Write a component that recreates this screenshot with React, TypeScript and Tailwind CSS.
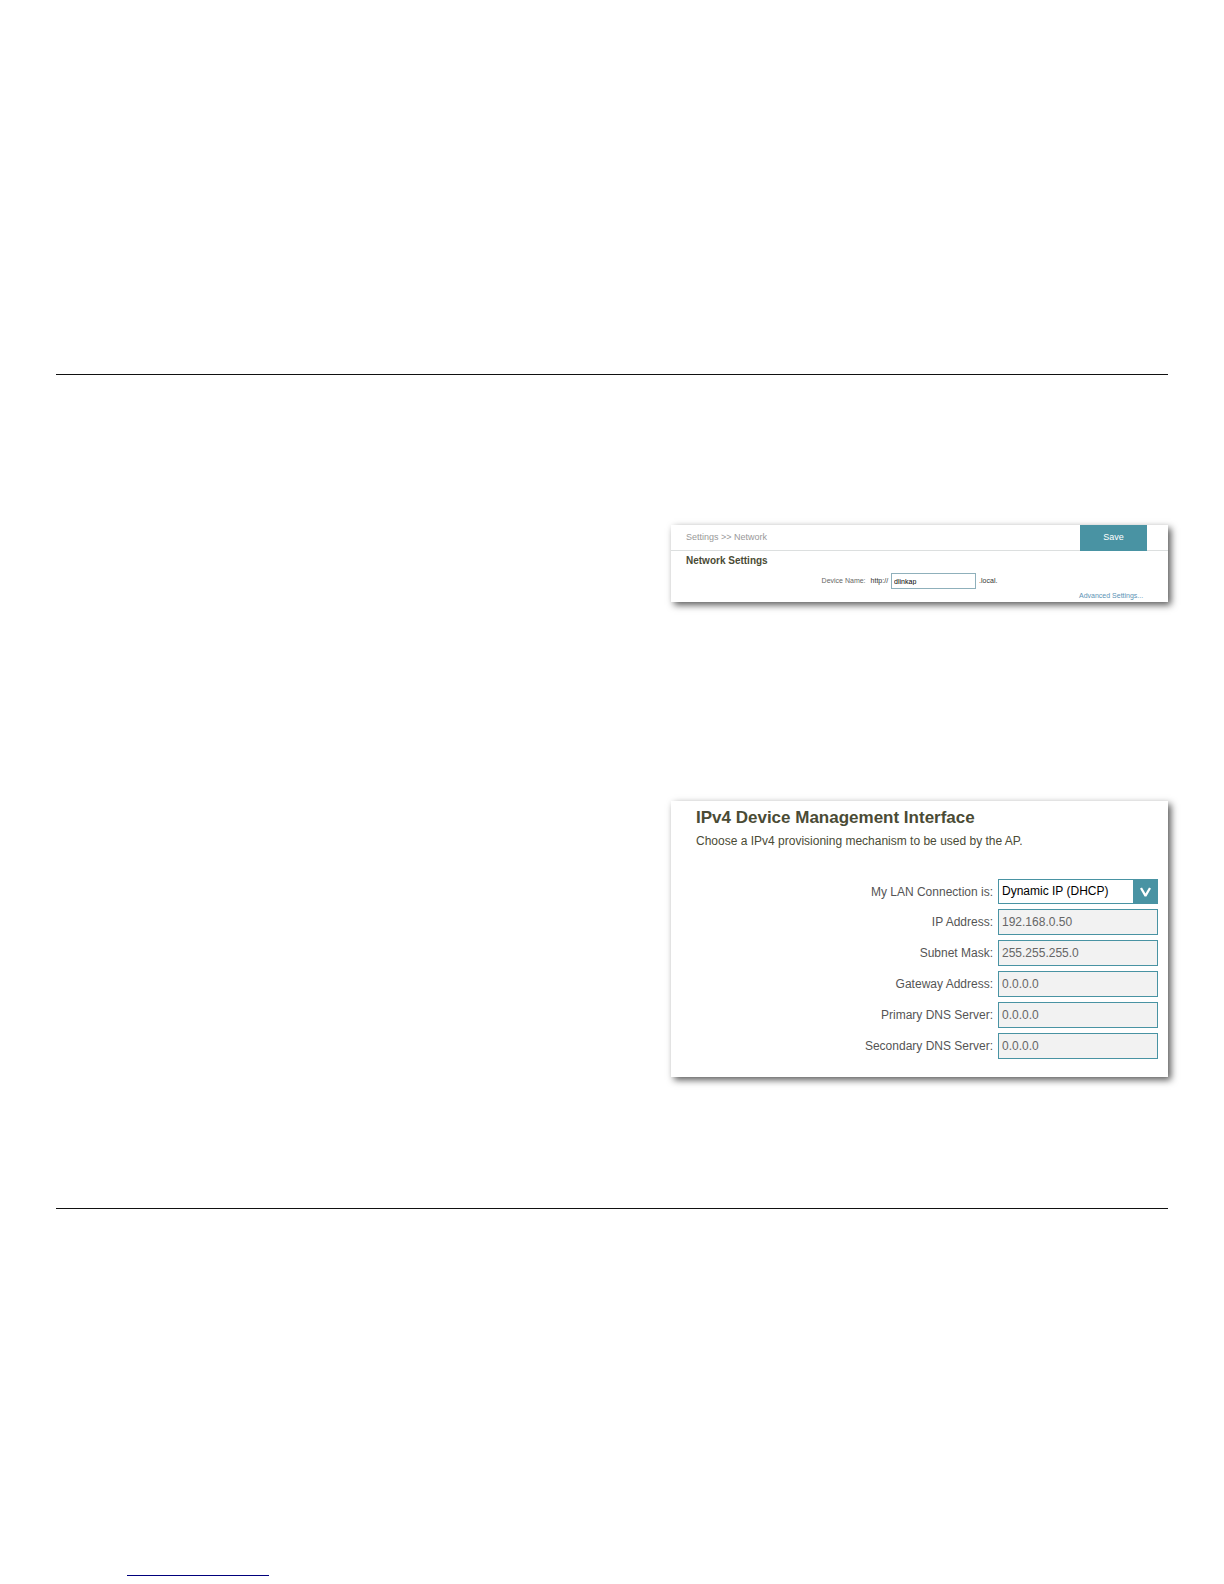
import React from "react";

interface AddressField {
  id: string;
  label: string;
  value: string;
}

const addressFields: AddressField[] = [
  { id: "ip-address", label: "IP Address:", value: "192.168.0.50" },
  { id: "subnet-mask", label: "Subnet Mask:", value: "255.255.255.0" },
  { id: "gateway", label: "Gateway Address:", value: "0.0.0.0" },
  { id: "primary-dns", label: "Primary DNS Server:", value: "0.0.0.0" },
  { id: "secondary-dns", label: "Secondary DNS Server:", value: "0.0.0.0" },
];

interface PanelProps {
  className?: string;
  children: React.ReactNode;
}

const Panel: React.FC<PanelProps> = ({ className = "", children }) => (
  <section
    className={`ml-auto w-full max-w-[497px] bg-white shadow-[3px_3px_7px_rgba(0,0,0,0.65)] ${className}`}
  >
    {children}
  </section>
);

const NetworkSettings: React.FC = () => (
  <Panel>
    <div className="flex h-[26px] items-start justify-between border-b border-[#dcdfdf] pl-[15px] pr-[21px]">
      <p className="text-[9px] leading-[25px] text-[#999]">
        Settings &gt;&gt; Network
      </p>
      <button
        type="button"
        className="h-[26px] w-[67px] bg-[#4993a3] text-[9px] text-white"
      >
        Save
      </button>
    </div>
    <h2 className="pl-[15px] text-[10px] font-bold leading-5 text-[#4a4b35]">
      Network Settings
    </h2>
    <div className="mt-[2px] flex items-center justify-center pr-5 text-[7px] text-[#333]">
      <label htmlFor="device-name" className="flex gap-[5px]">
        <span className="text-[#666]">Device Name:</span>
        <span>http://</span>
      </label>
      <input
        id="device-name"
        type="text"
        defaultValue="dlinkap"
        className="mx-[3px] h-4 w-[85px] border border-[#8fb0bb] px-[2px] text-black outline-none"
      />
      <span>.local.</span>
    </div>
    <div className="pl-[408px] text-[7px] leading-[13px]">
      <a href="#advanced" className="text-[#5c93b5]">
        Advanced Settings...
      </a>
    </div>
  </Panel>
);

const DeviceManagement: React.FC = () => (
  <Panel className="pb-[18px] pr-[10px] pt-[7px]">
    <div className="pl-[25px] text-[#4a4b35]">
      <h2 className="text-[17px] font-bold leading-5">
        IPv4 Device Management Interface
      </h2>
      <p className="mt-[3px] text-[12px] leading-5">
        Choose a IPv4 provisioning mechanism to be used by the AP.
      </p>
    </div>
    <div className="mt-7 flex flex-col gap-[5px] text-[12px] text-[#555]">
      <div className="flex items-center justify-end gap-[5px]">
        <label htmlFor="lan-connection">My LAN Connection is:</label>
        <div className="relative w-40">
          <select
            id="lan-connection"
            className="block h-[25px] w-full appearance-none border border-[#4993a3] bg-white pb-[2px] pl-[3px] pr-7 text-black outline-none"
          >
            <option>Dynamic IP (DHCP)</option>
          </select>
          <span className="pointer-events-none absolute inset-y-0 right-0 flex w-[25px] items-center justify-center bg-[#4993a3] pt-px">
            <svg viewBox="0 0 11 10" className="h-[10px] w-[11px]" fill="white">
              <path d="M0 1.4 2 .4 5.5 6.4 9 .4l2 1L6.4 9.6H4.6Z" />
            </svg>
          </span>
        </div>
      </div>
      {addressFields.map((field) => (
        <div key={field.id} className="flex items-center justify-end gap-[5px]">
          <label htmlFor={field.id}>{field.label}</label>
          <input
            id={field.id}
            type="text"
            value={field.value}
            readOnly
            className="h-[26px] w-40 border border-[#4993a3] bg-[#f2f2f2] px-[3px] text-[#666] outline-none"
          />
        </div>
      ))}
    </div>
  </Panel>
);

export default function App() {
  return (
    <div className="min-h-screen bg-white px-14 pt-[374px] font-['Liberation_Sans',Arial,sans-serif]">
      <main className="flex flex-col gap-[199px] border-y border-[#111] pb-[131px] pt-[150px]">
        <NetworkSettings />
        <DeviceManagement />
      </main>
      <footer className="px-[71px] pb-2 pt-[366px]">
        <hr className="w-[142px] border-[#00007c]" />
      </footer>
    </div>
  );
}
